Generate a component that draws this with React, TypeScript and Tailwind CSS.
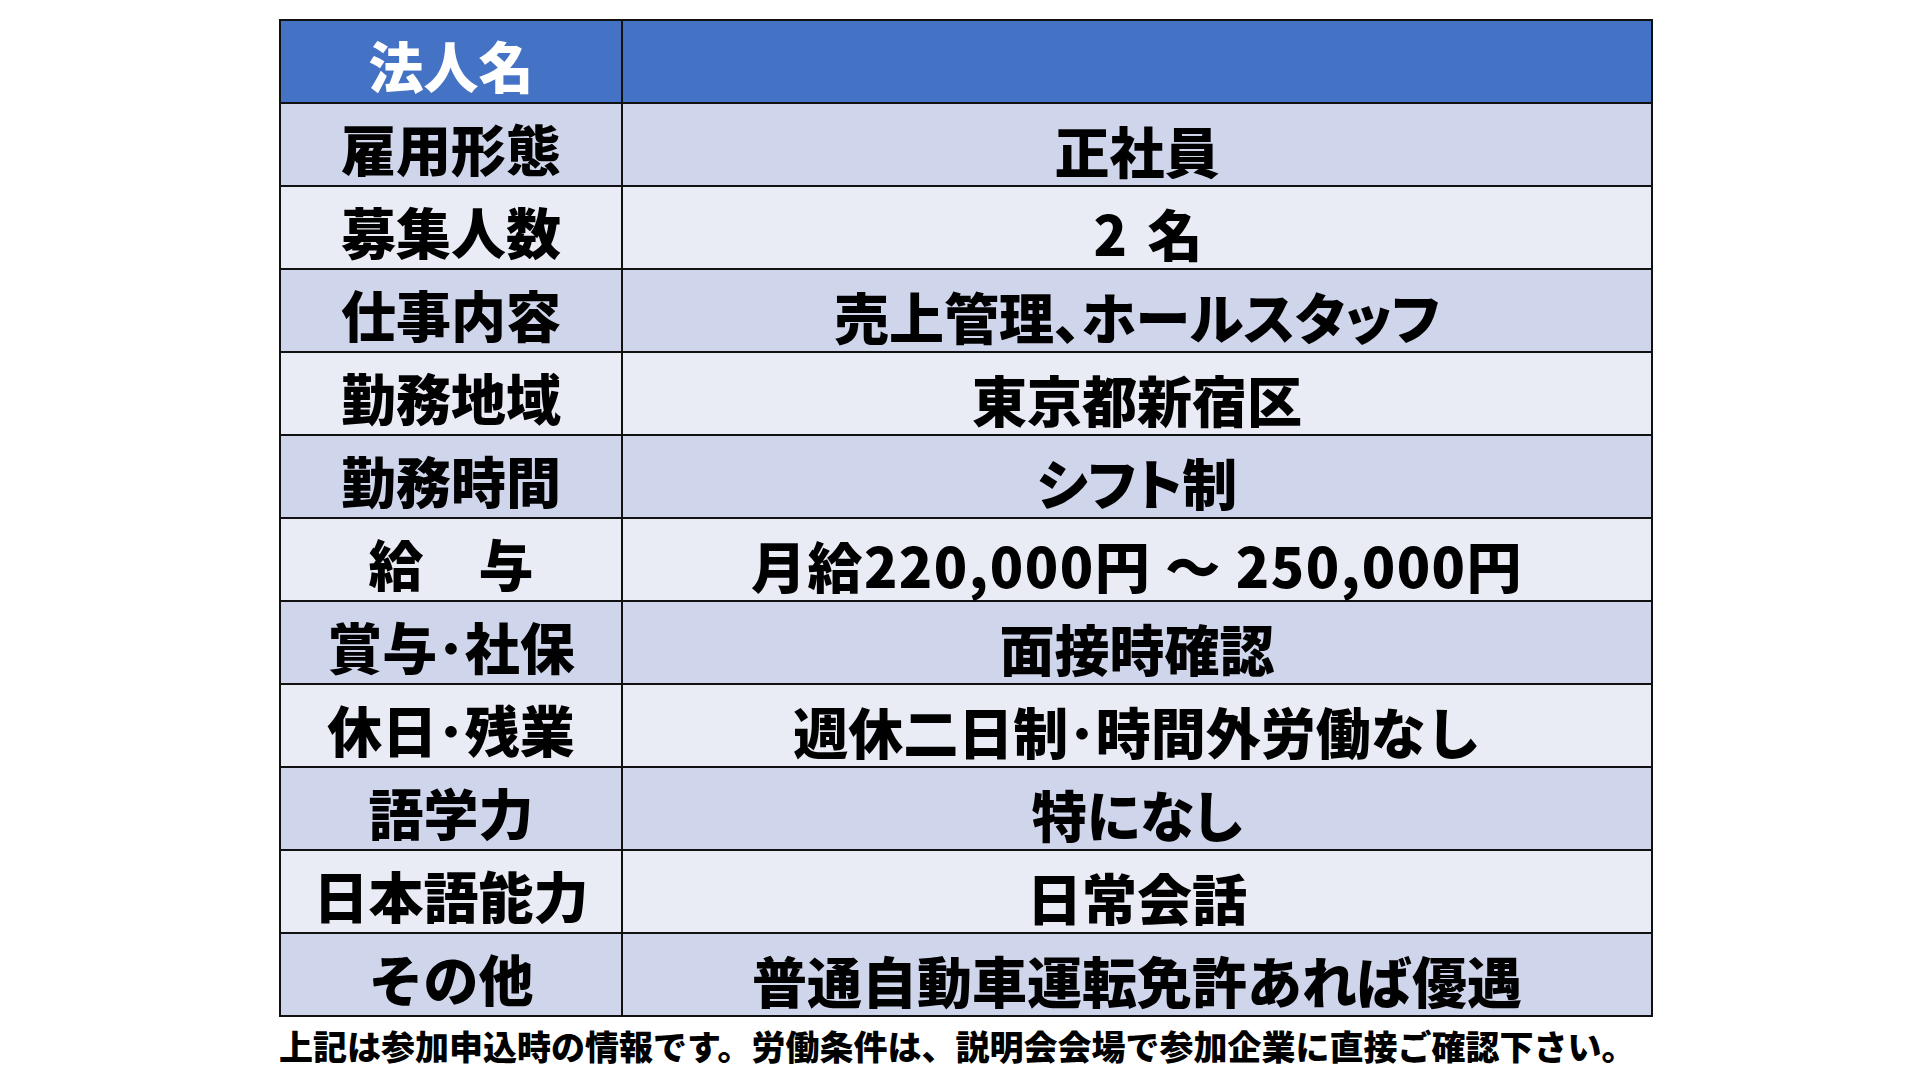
const rows: [string, string, string][] = [
  ["雇用形態", "正社員", ""],
  ["募集人数", "2 名", "[word-spacing:8px] pl-[22px]"],
  ["仕事内容", "売上管理、ホールスタッフ", "[font-feature-settings:'palt']"],
  ["勤務地域", "東京都新宿区", ""],
  ["勤務時間", "シフト制", "[font-feature-settings:'palt']"],
  ["給　与", "月給220,000円 ～ 250,000円", "tracking-[1.5px]"],
  ["賞与･社保", "面接時確認", ""],
  ["休日･残業", "週休二日制･時間外労働なし", ""],
  ["語学力", "特になし", "[font-feature-settings:'palt']"],
  ["日本語能力", "日常会話", ""],
  ["その他", "普通自動車運転免許あれば優遇", ""],
];

const font = { fontFamily: '"Noto Sans CJK JP", "Noto Sans", sans-serif' };

export default function App() {
  return (
    <div className="w-[1920px] h-[1080px] bg-white overflow-hidden" style={font}>
      <div className="ml-[279px] pt-[19px] w-[1374px]">
        <div className="border-2 border-[#111]">
          {/* header row */}
          <div className="flex h-[83px] bg-[#4472c4] border-b-2 border-[#111]">
            <div className="w-[342px] border-r-2 border-[#111] flex items-center justify-center pt-[6px] text-white text-[55px] font-black leading-none">
              法人名
            </div>
            <div className="flex-1" />
          </div>
          {rows.map(([label, value, extra], i) => (
            <div
              key={label}
              className={
                "flex " +
                (i % 2 === 0 ? "bg-[#cfd5ea]" : "bg-[#e9ebf5]") +
                (i < rows.length - 1 ? " h-[83px] border-b-2 border-[#111]" : " h-[81px]")
              }
            >
              <div className="w-[342px] border-r-2 border-[#111] flex items-center justify-center pt-[6px] text-black text-[55px] font-black leading-none">
                {label}
              </div>
              <div className={"flex-1 flex items-center justify-center pt-[10px] text-black text-[55px] font-black leading-none whitespace-pre " + extra}>
                {value}
              </div>
            </div>
          ))}
        </div>
        <p className="mt-[12px] text-[34px] font-black leading-none text-black whitespace-nowrap">
          上記は参加申込時の情報です。労働条件は、説明会会場で参加企業に直接ご確認下さい。
        </p>
      </div>
    </div>
  );
}
